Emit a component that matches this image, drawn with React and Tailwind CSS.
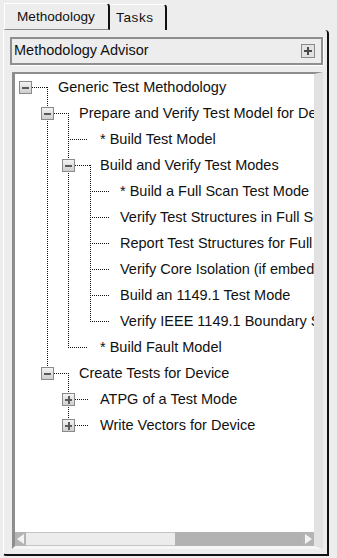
import React from 'react'

const tree = [
  {
    t: 'Generic Test Methodology',
    c: [
      {
        t: 'Prepare and Verify Test Model for Device',
        c: [
          { t: '* Build Test Model' },
          {
            t: 'Build and Verify Test Modes',
            c: [
              { t: '* Build a Full Scan Test Mode' },
              { t: 'Verify Test Structures in Full Scan Mode' },
              { t: 'Report Test Structures for Full Scan Mode' },
              { t: 'Verify Core Isolation (if embedded)' },
              { t: 'Build an 1149.1 Test Mode' },
              { t: 'Verify IEEE 1149.1 Boundary Scan' },
            ],
          },
          { t: '* Build Fault Model' },
        ],
      },
      {
        t: 'Create Tests for Device',
        c: [
          { t: 'ATPG of a Test Mode', closed: true },
          { t: 'Write Vectors for Device', closed: true },
        ],
      },
    ],
  },
]

// x of expander centre / text start per level, inside the white viewport
const CX = [10, 32, 53, 75]
const TX = [43, 64, 85, 105]
const ROW = 26

const flatten = (nodes, level, out) => {
  nodes.forEach((n) => {
    const row = { text: n.t, level, kind: n.c ? 'open' : n.closed ? 'closed' : 'leaf' }
    out.push(row)
    if (n.c) {
      flatten(n.c, level + 1, out)
      // last direct child index
      let last = out.length - 1
      while (out[last].level !== level + 1) last--
      row.last = last
    }
  })
  return out
}

const rows = flatten(tree, 0, [])

const TreeLines = () => {
  const lines = []
  const boxes = []
  rows.forEach((r, i) => {
    const rc = 13 + ROW * i
    const cx = CX[r.level]
    if (r.kind === 'leaf') {
      lines.push(<line key={'h' + i} x1={cx} x2={cx + 20} y1={rc + 0.5} y2={rc + 0.5} />)
      return
    }
    const nx = CX[r.level + 1]
    lines.push(<line key={'h' + i} x1={cx + 7} x2={r.kind === 'open' ? nx + 1 : cx + 21} y1={rc + 0.5} y2={rc + 0.5} />)
    if (r.kind === 'open') {
      const end = 13 + ROW * r.last
      lines.push(<line key={'v' + i} x1={nx + 0.5} x2={nx + 0.5} y1={rc} y2={end + 1} />)
    }
    boxes.push(
      <g key={'b' + i}>
        <rect x={cx - 6 + 0.5} y={rc - 6 + 0.5} width="12" height="12" fill="url(#boxfill)" stroke="#8a8a8a" />
        <rect x={cx - 3} y={rc} width="7" height="2" fill="#5a5a5a" />
        {r.kind === 'closed' && <rect x={cx} y={rc - 3} width="2" height="8" fill="#5a5a5a" />}
      </g>
    )
  })
  return (
    <svg className="absolute inset-0 pointer-events-none" width="299" height="458" shapeRendering="crispEdges">
      <defs>
        <linearGradient id="boxfill" x1="0" y1="0" x2="0" y2="1">
          <stop offset="0" stopColor="#f4f4f4" />
          <stop offset="1" stopColor="#cdcdcd" />
        </linearGradient>
      </defs>
      <g stroke="#111" strokeDasharray="1 1">{lines}</g>
      {boxes}
    </svg>
  )
}

const PlusBox = () => (
  <svg width="14" height="14" shapeRendering="crispEdges">
    <rect x="0.5" y="0.5" width="13" height="13" fill="#e2e2e2" stroke="#8a8a8a" />
    <rect x="3" y="6" width="8" height="2" fill="#4a4a4a" />
    <rect x="6" y="3" width="2" height="8" fill="#4a4a4a" />
  </svg>
)

const Arrow = ({ dir }) => (
  <svg width="11" height="14">
    <rect width="11" height="14" fill="#b4b4b4" />
    {dir === 'left' ? (
      <polygon points="2,7 9,2 9,12" fill="#f4f4f4" />
    ) : (
      <polygon points="9,7 2,2 2,12" fill="#f4f4f4" />
    )}
  </svg>
)

export default function App() {
  return (
    <div className="w-[337px] h-[558px] bg-[#ededed] overflow-hidden font-['Liberation_Sans',Arial,sans-serif] text-[14.5px] text-[#111]">
      {/* tab strip */}
      <div className="flex items-end h-[30px] pl-[4px] text-[13.6px]">
        <div className="w-[106px] h-[27px] border-l border-t border-white border-r-2 border-r-[#111] border-b border-b-dashed border-b-[#8a8a8a] rounded-tr-[4px] pl-[12px] pt-[2px] flex items-center">
          Methodology
        </div>
        <div className="w-[57px] h-[26px] border-t border-white border-r-2 border-r-[#111] rounded-tr-[4px] pl-[6px] pt-[2px] flex items-center tracking-[0.6px]">
          Tasks
        </div>
      </div>

      {/* tab body */}
      <div className="ml-[3px] w-[326px] h-[526px] border-l border-white border-r-2 border-r-[#111] border-b-2 border-b-[#111] rounded-tr-[4px] rounded-bl-[3px] flex flex-col">
        <div className="mt-[7px] ml-[6px] w-[313px] h-[28px] border-2 border-[#8e8e8e] shadow-[1px_1px_0_#fff] flex items-center justify-between pl-[2px] pr-[6px]">
          <span>Methodology Advisor</span>
          <PlusBox />
        </div>

        <div className="mt-[7px] ml-[8px] w-[311px] h-[477px] border-t-2 border-l-[3px] border-[#8d8d8d] border-r-[9px] border-r-[#e2e2e2] border-b-[3px] border-b-[#f6f6f6] flex flex-col">
          <div className="relative flex-1 bg-white overflow-hidden">
            {rows.map((r, i) => (
              <div
                key={i}
                className="h-[26px] pt-[2px] flex items-center whitespace-nowrap"
                style={{ paddingLeft: TX[r.level] }}
              >
                {r.text}
              </div>
            ))}
            <TreeLines />
          </div>
          <div className="h-[14px] flex">
            <Arrow dir="left" />
            <div className="w-[149px] bg-[#ececec] border-t border-b border-[#c4c4c4]" />
            <div className="w-[128px] bg-[#b2b2b2]" />
            <Arrow dir="right" />
          </div>
        </div>
      </div>
    </div>
  )
}
